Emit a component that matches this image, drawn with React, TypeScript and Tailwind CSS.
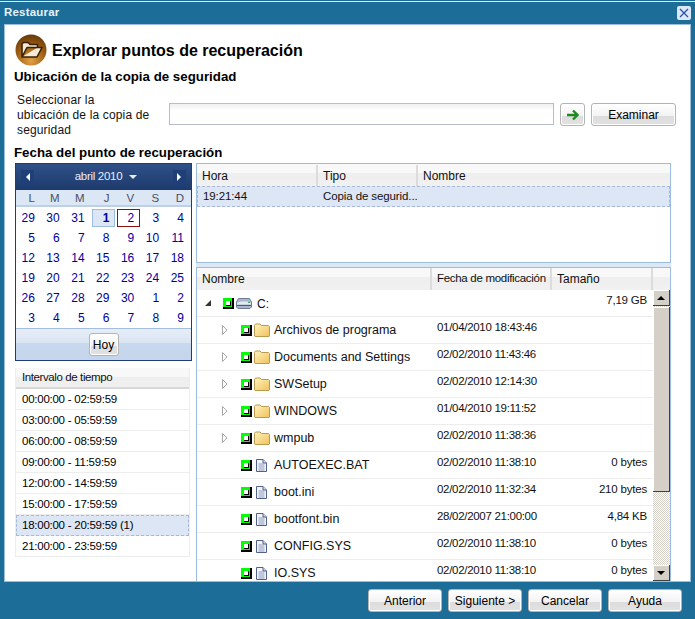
import type { ReactNode } from "react"

const FONT = "font-['Liberation_Sans',Arial,sans-serif]"

const weeks = [
  [29, 30, 31, 1, 2, 3, 4],
  [5, 6, 7, 8, 9, 10, 11],
  [12, 13, 14, 15, 16, 17, 18],
  [19, 20, 21, 22, 23, 24, 25],
  [26, 27, 28, 29, 30, 1, 2],
  [3, 4, 5, 6, 7, 8, 9],
]

const intervals = [
  "00:00:00 - 02:59:59",
  "03:00:00 - 05:59:59",
  "06:00:00 - 08:59:59",
  "09:00:00 - 11:59:59",
  "12:00:00 - 14:59:59",
  "15:00:00 - 17:59:59",
  "18:00:00 - 20:59:59 (1)",
  "21:00:00 - 23:59:59",
]

const files = [
  { name: "Archivos de programa", date: "01/04/2010 18:43:46", size: "", folder: true },
  { name: "Documents and Settings", date: "02/02/2010 11:43:46", size: "", folder: true },
  { name: "SWSetup", date: "02/02/2010 12:14:30", size: "", folder: true },
  { name: "WINDOWS", date: "01/04/2010 19:11:52", size: "", folder: true },
  { name: "wmpub", date: "02/02/2010 11:38:36", size: "", folder: true },
  { name: "AUTOEXEC.BAT", date: "02/02/2010 11:38:10", size: "0 bytes", folder: false },
  { name: "boot.ini", date: "02/02/2010 11:32:34", size: "210 bytes", folder: false },
  { name: "bootfont.bin", date: "28/02/2007 21:00:00", size: "4,84 KB", folder: false },
  { name: "CONFIG.SYS", date: "02/02/2010 11:38:10", size: "0 bytes", folder: false },
  { name: "IO.SYS", date: "02/02/2010 11:38:10", size: "0 bytes", folder: false },
]

function Button({ children, className }: { children: ReactNode; className: string }) {
  return (
    <button className={`relative h-[23px] shrink-0 rounded-[3px] border border-[#b4b4b4] bg-[linear-gradient(#ffffff_0%,#f3f3f3_55%,#dcdcdc_56%,#e2e2e2_100%)] text-[12px] leading-[20px] text-black shadow-[inset_0_0_0_1px_#ffffff] ${className}`}>
      {children}
    </button>
  )
}

function HeaderCell({ children, className }: { children?: ReactNode; className: string }) {
  return (
    <div className={`flex items-center whitespace-nowrap border-r-2 border-r-[#dcdcdc] pl-[5px] ${className}`}>{children}</div>
  )
}

function Check() {
  return (
    <svg width="11" height="11" viewBox="0 0 11 11" className="shrink-0">
      <rect x="0" y="0" width="11" height="11" fill="#000000" />
      <rect x="0" y="0" width="9" height="9" fill="#00ff00" />
      <rect x="3" y="3" width="5" height="5" fill="#000000" />
      <rect x="3" y="3" width="4" height="4" fill="#ffffff" />
    </svg>
  )
}

function Folder() {
  return (
    <svg width="16" height="14" viewBox="0 0 16 14" className="shrink-0">
      <defs>
        <linearGradient id="folderFill" x1="0" y1="0" x2="1" y2="1">
          <stop offset="0" stopColor="#fff3bd" />
          <stop offset="1" stopColor="#efc25c" />
        </linearGradient>
      </defs>
      <path d="M0.5 2.5 L1.5 1 H6 L7.5 2.5 H14.5 L15.5 3.5 V13 L15 13.5 H1 L0.5 13 Z" fill="url(#folderFill)" stroke="#b89a50" />
    </svg>
  )
}

function FileIcon() {
  return (
    <svg width="11" height="13" viewBox="0 0 11 13" className="shrink-0">
      <path d="M0.5 0.5 H7 L10.5 4 V12.5 H0.5 Z" fill="#f3f5fa" stroke="#4f5f8e" />
      <path d="M7 0.5 V4 H10.5" fill="#d5dcec" stroke="#4f5f8e" />
      <path d="M2.5 5 H8.5 M2.5 7 H8.5 M2.5 9 H8.5 M2.5 11 H8.5" stroke="#8c99bd" />
    </svg>
  )
}

function Drive() {
  return (
    <svg width="16" height="11" viewBox="0 0 16 11" className="shrink-0">
      <path d="M2.5 0.5 H13.5 L15.5 4 V9 L14 10.5 H2 L0.5 9 V4 Z" fill="#a9b6cb" stroke="#6f7d96" />
      <path d="M1 4.5 C5 3 11 3 15 4.5 V6.5 H1 Z" fill="#e6ebf3" />
      <path d="M1 7.5 H15" stroke="#4a5a78" />
      <rect x="12" y="4" width="2" height="1" fill="#2fae4a" />
    </svg>
  )
}

function Title({ children, className }: { children: ReactNode; className: string }) {
  return <div className={`-ml-px flex items-center text-[13.3px] font-bold text-black ${className}`}>{children}</div>
}

export default function App() {
  return (
    <div className={`flex h-[619px] w-[695px] flex-col overflow-hidden bg-[#1c6d98] text-[12px] text-[#111111] ${FONT}`}>
      <div className="mt-px h-px w-full bg-[#d9e8f2]" />

      {/* title bar */}
      <div className="flex h-[22px] items-center justify-between pl-[4px] pr-[4px]">
        <span className="text-[11.5px] font-bold tracking-[0.2px] text-[#e8f2f8]">Restaurar</span>
        <div className="flex h-[14px] w-[14px] items-center justify-center rounded-[2px] bg-[#dbe8f8]">
          <svg width="10" height="10" viewBox="0 0 10 10">
            <path d="M1 1 L9 9 M9 1 L1 9" stroke="#2a4fa8" strokeWidth="1.2" />
          </svg>
        </div>
      </div>

      {/* dialog body */}
      <div className="ml-[4px] flex h-[558px] w-[687px] shrink-0 flex-col overflow-hidden border border-[#9dbde0] bg-white pl-[10px]">
        <div className="mt-[9px] flex h-[32px] shrink-0 items-center gap-[5px]">
          <svg width="32" height="32" viewBox="0 0 32 32" className="shrink-0">
            <defs>
              <radialGradient id="brownBall" cx="0.5" cy="0.85" r="0.9">
                <stop offset="0" stopColor="#e0a044" />
                <stop offset="0.55" stopColor="#9c5c14" />
                <stop offset="1" stopColor="#5e3408" />
              </radialGradient>
            </defs>
            <circle cx="16" cy="16" r="15.5" fill="url(#brownBall)" />
            <path d="M7 23 V10 L8.5 8.5 H13 L15 10.5 H22.5 V13.5 H12 L7 23 H22 L27 13.5 H22.5" fill="#f6ead6" stroke="#3a2106" strokeWidth="1.6" strokeLinejoin="round" />
          </svg>
          <span className="pt-px text-[16px] font-bold text-black">Explorar puntos de recuperación</span>
        </div>

        <Title className="h-[20px] shrink-0 pt-[2px]">Ubicación de la copia de seguridad</Title>

        <div className="mt-[6px] flex h-[46px] shrink-0 items-start">
          <div className="ml-[2px] w-[152px] shrink-0 pt-px text-[12px] leading-[15px] tracking-[0.15px]">
            <div>Seleccionar la</div>
            <div>ubicación de la copia de</div>
            <div>seguridad</div>
          </div>
          <div className="mt-[11px] h-[22px] w-[385px] shrink-0 border border-[#b8bccb] bg-[linear-gradient(#f0f0f0,#ffffff_35%)]" />
          <Button className="ml-[6px] mt-[11px] flex w-[25px] items-center justify-center">
            <svg width="13" height="12" viewBox="0 0 13 12">
              <path d="M1 6 H11 M7 1.5 L11.5 6 L7 10.5" fill="none" stroke="#1f8a1f" strokeWidth="2.4" />
            </svg>
          </Button>
          <Button className="ml-[6px] mt-[11px] w-[85px]">Examinar</Button>
        </div>

        <Title className="mt-[4px] h-[20px] shrink-0 pt-px">Fecha del punto de recuperación</Title>

        <div className="mt-px flex min-h-0 flex-1 gap-[4px]">
          {/* left column */}
          <div className="w-[177px] shrink-0">
            <div className="flex h-[198px] flex-col border border-[#1f3d74] bg-white">
              <div className="flex h-[26px] shrink-0 items-center justify-between bg-[linear-gradient(#2f5188,#1d3a6c)] px-[5px]">
                <div className="flex h-[15px] w-[13px] items-center justify-center bg-[#1f3f78]">
                  <div className="h-0 w-0 border-y-[4px] border-r-[4px] border-y-transparent border-r-white" />
                </div>
                <div className="flex items-center gap-[7px] pl-[5px] text-[11.5px] tracking-[-0.3px] text-[#e6eefa]">
                  abril 2010
                  <div className="h-0 w-0 border-x-[4px] border-t-[4px] border-x-transparent border-t-[#e6eefa]" />
                </div>
                <div className="flex h-[15px] w-[13px] items-center justify-center bg-[#1f3f78]">
                  <div className="h-0 w-0 border-y-[4px] border-l-[4px] border-y-transparent border-l-white" />
                </div>
              </div>
              <div className="grid h-[17px] shrink-0 grid-cols-7 items-center border-b-2 border-b-[#bcd0ea] bg-[#dce7f5] pr-[1px] text-[11.5px] text-[#4a4f66]">
                {["L", "M", "M", "J", "V", "S", "D"].map((d, i) => (
                  <div key={i} className="pr-[6px] text-right">{d}</div>
                ))}
              </div>
              <div className="mt-px grid flex-1 grid-cols-7 grid-rows-6 pr-[1px] text-[12px] text-[#00009c]">
                {weeks.flat().map((d, i) => (
                  <div key={i} className="flex items-center justify-end pr-[6px]">
                    {i === 3 ? (
                      <div className="-mr-[6px] flex h-[18px] w-[23px] items-center justify-end border border-[#9dbde0] bg-[#dde6f5] pr-[5px] font-bold">{d}</div>
                    ) : i === 4 ? (
                      <div className="-mr-[6px] flex h-[18px] w-[23px] items-center justify-end border border-[#8c1010] pr-[5px]">{d}</div>
                    ) : (
                      d
                    )}
                  </div>
                ))}
              </div>
              <div className="flex h-[32px] shrink-0 items-center justify-center border-t border-t-[#a4bde0] bg-[linear-gradient(#e6edf7,#dae5f3_45%,#c8d8ed_46%,#c4d5ec)]">
                <Button className="h-[22px] w-[30px]">Hoy</Button>
              </div>
            </div>

            <div className="mt-[7px] w-[175px] border-x border-x-[#ededed] text-[11.5px] tracking-[-0.25px]">
              <div className="flex h-[21px] items-center border-b-2 border-b-[#d8d8d8] bg-[linear-gradient(#f8f8f8,#f8f8f8_45%,#eeeeee_46%,#f0f0f0)] pl-[6px] pt-px tracking-[-0.4px]">
                Intervalo de tiempo
              </div>
              {intervals.map((t, i) =>
                i === 6 ? (
                  <div key={t} className="flex h-[21px] items-center border border-dashed border-[#a8b8d8] bg-[#dde6f5] pl-[5px] text-black">{t}</div>
                ) : (
                  <div key={t} className="flex h-[21px] items-center border-b border-b-[#ededed] pl-[6px] pt-px text-black">{t}</div>
                ),
              )}
            </div>
          </div>

          {/* right column */}
          <div className="flex w-[475px] shrink-0 flex-col bg-[#dde8f6]">
            <div className="h-[100px] shrink-0 border border-[#9dbde0] bg-white">
              <div className="flex h-[22px] bg-[linear-gradient(#f8f8f8,#f8f8f8_40%,#eeeeee_41%,#f1f1f1)] pt-px">
                <HeaderCell className="w-[121px]">Hora</HeaderCell>
                <HeaderCell className="w-[100px]">Tipo</HeaderCell>
                <div className="flex flex-1 items-center pl-[5px]">Nombre</div>
              </div>
              <div className="flex h-[21px] items-center whitespace-nowrap border border-dashed border-[#a8b8d8] bg-[#dde6f5] text-[11.5px] tracking-[-0.1px]">
                <div className="w-[120px] pl-[5px]">19:21:44</div>
                <div className="w-[100px] pl-[5px]">Copia de segurid...</div>
              </div>
            </div>

            <div className="mt-[4px] min-h-0 flex-1 overflow-hidden border-x border-t border-[#9dbde0] bg-white">
              <div className="flex h-[22px] bg-[linear-gradient(#f8f8f8,#f8f8f8_40%,#eeeeee_41%,#f1f1f1)]">
                <HeaderCell className="w-[235px]">Nombre</HeaderCell>
                <HeaderCell className="w-[120px] text-[11.5px] tracking-[-0.3px]">Fecha de modificación</HeaderCell>
                <HeaderCell className="w-[101px]">Tamaño</HeaderCell>
              </div>
              <div className="flex">
                <div className="w-[456px] shrink-0">
                  <div className="flex h-[27px] items-center border-b border-b-[#ededed]">
                    <div className="flex w-[235px] items-center">
                      <div className="ml-[8px] h-0 w-0 border-b-[6px] border-l-[6px] border-b-[#333333] border-l-transparent" />
                      <div className="ml-[12px]"><Check /></div>
                      <div className="ml-[2px]"><Drive /></div>
                      <span className="ml-[5px] pt-[2px]">C:</span>
                    </div>
                    <div className="w-[120px]" />
                    <div className="w-[95px] pb-[4px] text-right text-[11.5px] tracking-[-0.2px]">7,19 GB</div>
                  </div>
                  {files.map((f) => (
                    <div key={f.name} className="flex h-[27px] items-center border-b border-b-[#ededed]">
                      <div className="flex w-[235px] items-center">
                        {f.folder ? (
                          <svg width="6" height="10" viewBox="0 0 6 10" className="ml-[25px] shrink-0">
                            <path d="M0.5 0.5 L5 5 L0.5 9.5 Z" fill="#ffffff" stroke="#a8a8a8" />
                          </svg>
                        ) : (
                          <div className="ml-[25px] w-[6px] shrink-0" />
                        )}
                        <div className="ml-[13px]"><Check /></div>
                        {f.folder ? (
                          <div className="ml-[2px]"><Folder /></div>
                        ) : (
                          <div className="ml-[4px] mr-[3px] mt-[1px]"><FileIcon /></div>
                        )}
                        <span className="ml-[4px] whitespace-nowrap text-[12.5px]">{f.name}</span>
                      </div>
                      <div className="w-[120px] whitespace-nowrap pb-[5px] pl-[5px] text-[11.5px] tracking-[-0.3px]">{f.date}</div>
                      <div className="w-[95px] pb-[5px] text-right text-[11.5px] tracking-[-0.2px]">{f.size}</div>
                    </div>
                  ))}
                </div>

                {/* scrollbar */}
                <div className="flex h-[291px] w-[17px] shrink-0 flex-col bg-[repeating-conic-gradient(#d4d0c8_0_25%,#ffffff_0_50%)] bg-[length:2px_2px]">
                  <div className="flex h-[16px] shrink-0 items-center justify-center border-r border-b border-[#404040] bg-[#d4d0c8] shadow-[inset_1px_1px_0_#ffffff]">
                    <div className="h-0 w-0 border-x-[4px] border-b-[4px] border-x-transparent border-b-black" />
                  </div>
                  <div className="mt-px h-[185px] shrink-0 border-r border-b border-[#404040] bg-[#d4d0c8] shadow-[inset_1px_1px_0_#ffffff]" />
                  <div className="flex-1" />
                  <div className="flex h-[16px] shrink-0 items-center justify-center border-r border-b border-[#404040] bg-[#d4d0c8] shadow-[inset_1px_1px_0_#ffffff]">
                    <div className="h-0 w-0 border-x-[4px] border-t-[4px] border-x-transparent border-t-black" />
                  </div>
                </div>
              </div>
            </div>
          </div>
        </div>
      </div>

      {/* footer buttons */}
      <div className="flex flex-1 items-center justify-end gap-[6px] pr-[13px]">
        <Button className="w-[74px]">Anterior</Button>
        <Button className="w-[74px]">Siguiente &gt;</Button>
        <Button className="w-[74px]">Cancelar</Button>
        <Button className="w-[74px]">Ayuda</Button>
      </div>
    </div>
  )
}
